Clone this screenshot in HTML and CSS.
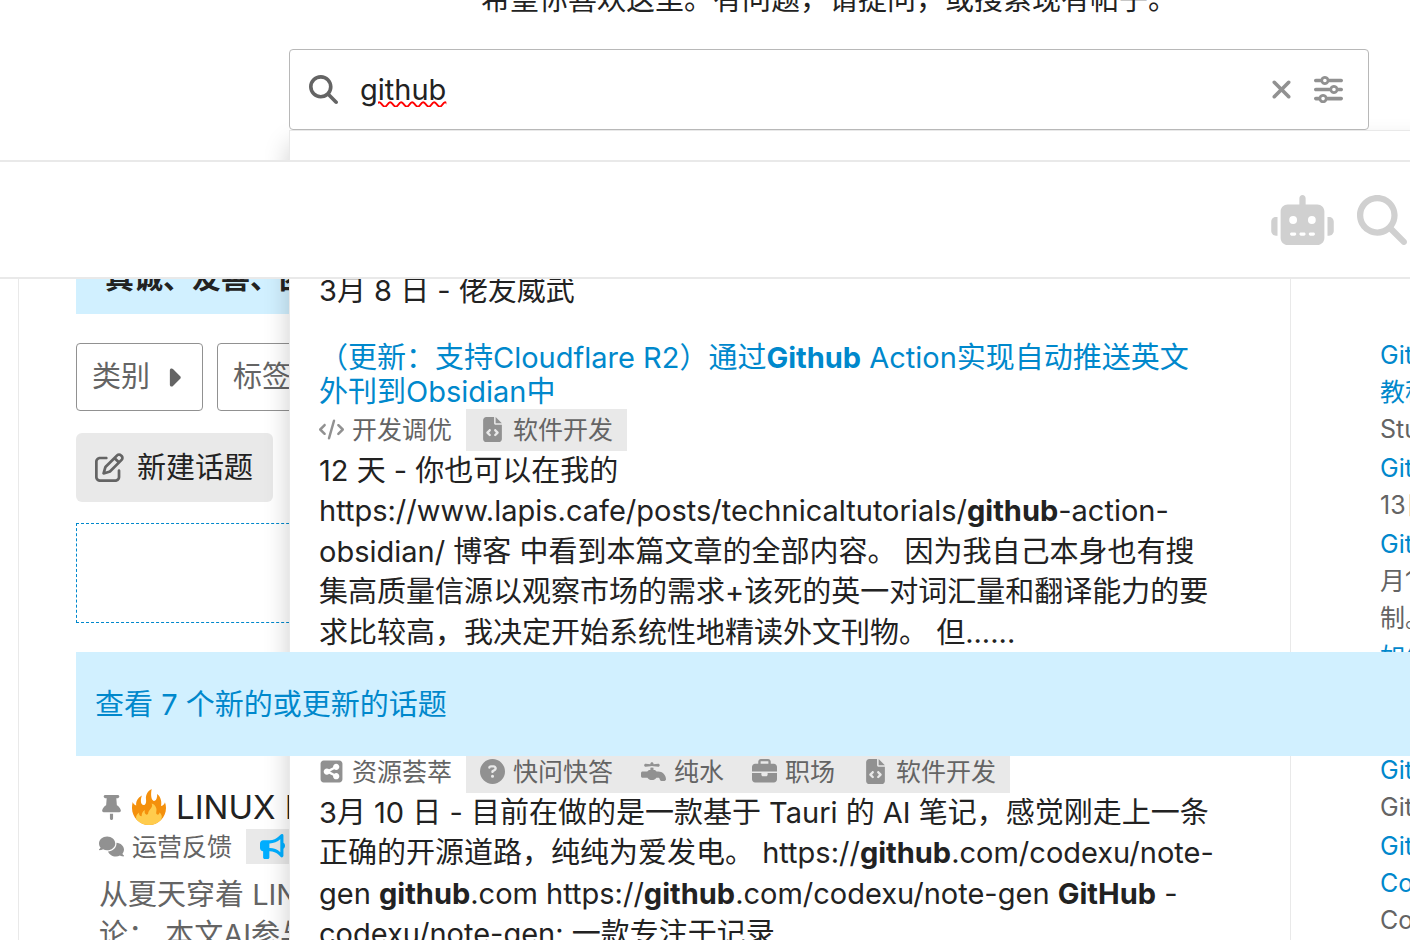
FILE: index.html
```html
<!DOCTYPE html>
<html lang="zh-CN">
  <head>
    <title>LINUX DO</title>
    <meta charset="UTF-8" />
    <meta name="viewport" content="width=device-width, initial-scale=1.0" />
    <link rel="stylesheet" href="styles.css">
  </head>
  <body>
    <!-- icon sprite -->
    <svg class="sprite" aria-hidden="true">
      <symbol id="search" viewBox="0 0 512 512"><path d="M416 208c0 45.900-14.900 88.300-40 122.700L502.600 457.400c12.500 12.500 12.500 32.800 0 45.300s-32.800 12.500-45.300 0L330.700 376c-34.400 25.200-76.800 40-122.700 40C93.100 416 0 322.900 0 208S93.100 0 208 0S416 93.100 416 208zM208 352a144 144 0 1 0 0-288 144 144 0 1 0 0 288z" /></symbol>
      <symbol id="xmark" viewBox="0 0 384 512"><path d="M342.600 150.600c12.500-12.500 12.500-32.800 0-45.300s-32.800-12.500-45.300 0L192 210.700 86.600 105.400c-12.500-12.500-32.800-12.500-45.300 0s-12.500 32.800 0 45.300L146.700 256 41.400 361.400c-12.500 12.500-12.500 32.800 0 45.300s32.800 12.500 45.300 0L192 301.300 297.400 406.600c12.500 12.500 32.800 12.500 45.300 0s12.500-32.800 0-45.300L237.300 256 342.600 150.600z" /></symbol>
      <symbol id="sliders" viewBox="0 0 512 512"><path d="M0 416c0 17.700 14.300 32 32 32l54.700 0c12.300 28.300 40.500 48 73.300 48s61-19.700 73.300-48L480 448c17.700 0 32-14.300 32-32s-14.300-32-32-32l-246.700 0c-12.300-28.300-40.500-48-73.300-48s-61 19.700-73.300 48L32 384c-17.700 0-32 14.300-32 32zm128 0a32 32 0 1 1 64 0 32 32 0 1 1 -64 0zM320 256a32 32 0 1 1 64 0 32 32 0 1 1 -64 0zm32-80c-32.800 0-61 19.700-73.300 48L32 224c-17.700 0-32 14.300-32 32s14.300 32 32 32l246.700 0c12.300 28.300 40.500 48 73.300 48s61-19.700 73.300-48l54.700 0c17.700 0 32-14.300 32-32s-14.300-32-32-32l-54.700 0c-12.300-28.300-40.500-48-73.300-48zM192 128a32 32 0 1 1 0-64 32 32 0 1 1 0 64zm73.300-64C253 35.700 224.800 16 192 16s-61 19.700-73.300 48L32 64C14.300 64 0 78.300 0 96s14.300 32 32 32l86.700 0c12.300 28.300 40.500 48 73.300 48s61-19.700 73.300-48L480 128c17.700 0 32-14.300 32-32s-14.300-32-32-32L265.300 64z" /></symbol>
      <symbol id="robot" viewBox="0 0 640 512"><path d="M320 0c17.700 0 32 14.300 32 32V96H472c39.800 0 72 32.200 72 72V440c0 39.800-32.200 72-72 72H168c-39.800 0-72-32.200-72-72V168c0-39.800 32.200-72 72-72H288V32c0-17.700 14.300-32 32-32zM208 384c-8.800 0-16 7.200-16 16s7.200 16 16 16h32c8.800 0 16-7.200 16-16s-7.200-16-16-16H208zm96 0c-8.800 0-16 7.200-16 16s7.200 16 16 16h32c8.800 0 16-7.200 16-16s-7.200-16-16-16H304zm96 0c-8.800 0-16 7.200-16 16s7.200 16 16 16h32c8.800 0 16-7.200 16-16s-7.200-16-16-16H400zM264 256a40 40 0 1 0 -80 0 40 40 0 1 0 80 0zm152 40a40 40 0 1 0 0-80 40 40 0 1 0 0 80zM48 224H64V416H48c-26.500 0-48-21.500-48-48V272c0-26.500 21.500-48 48-48zm544 0c26.500 0 48 21.500 48 48v96c0 26.500-21.500 48-48 48H576V224h16z" /></symbol>
      <symbol id="caret" viewBox="0 0 256 512"><path d="M246.600 278.600c12.500-12.500 12.500-32.800 0-45.300l-128-128c-9.200-9.200-22.900-11.900-34.900-6.900s-19.800 16.600-19.800 29.600l0 256c0 12.900 7.800 24.600 19.800 29.600s25.700 2.200 34.900-6.900l128-128z" /></symbol>
      <symbol id="edit" viewBox="0 0 512 512"><path d="M441 58.900L453.100 71c9.400 9.400 9.400 24.600 0 33.900L424 134.100 377.900 88 407 58.900c9.400-9.400 24.600-9.400 33.900 0zM209.800 256.200L344 121.900 390.100 168 255.800 302.200c-2.900 2.900-6.500 5-10.400 6.100l-58.500 16.700 16.700-58.500c1.100-3.900 3.200-7.500 6.100-10.400zM373.100 25L175.800 222.200c-8.700 8.700-15 19.400-18.300 31.100l-28.600 100c-2.400 8.400-.1 17.400 6.100 23.600s15.200 8.500 23.600 6.100l100-28.600c11.800-3.400 22.500-9.700 31.100-18.300L487 138.900c28.100-28.100 28.100-73.700 0-101.800L474.900 25C446.800-3.100 401.200-3.100 373.100 25zM88 64C39.400 64 0 103.400 0 152V424c0 48.600 39.400 88 88 88H360c48.600 0 88-39.400 88-88V312c0-13.300-10.700-24-24-24s-24 10.700-24 24V424c0 22.100-17.900 40-40 40H88c-22.100 0-40-17.900-40-40V152c0-22.100 17.900-40 40-40H200c13.300 0 24-10.700 24-24s-10.700-24-24-24H88z" /></symbol>
      <symbol id="pin" viewBox="0 0 384 512"><path d="M32 32C32 14.300 46.300 0 64 0H320c17.700 0 32 14.300 32 32s-14.300 32-32 32H290.500l11.400 148.200c36.700 19.900 65.700 53.200 79.500 94.700l1 3c3.300 9.800 1.600 20.500-4.400 28.800s-15.700 13.300-26 13.300H32c-10.300 0-19.900-4.900-26-13.300s-7.700-19.100-4.400-28.800l1-3c13.800-41.500 42.800-74.800 79.500-94.700L93.500 64H64C46.300 64 32 49.700 32 32zM160 384h64v96c0 17.700-14.300 32-32 32s-32-14.300-32-32V384z" /></symbol>
      <symbol id="comments" viewBox="0 0 640 512"><path d="M208 352c114.900 0 208-78.800 208-176S322.900 0 208 0S0 78.800 0 176c0 38.600 14.700 74.300 39.600 103.400c-3.500 9.400-8.700 17.700-14.200 24.700c-4.800 6.200-9.700 11-13.300 14.300c-1.800 1.600-3.300 2.900-4.300 3.700c-.5 .4-.9 .7-1.100 .8l-.2 .2C1 327.200-1.400 334.400 .8 340.900S9.100 352 16 352c21.800 0 43.800-5.600 62.100-12.500c9.200-3.500 17.800-7.400 25.200-11.400C134.100 343.300 169.800 352 208 352zM448 176c0 112.300-99.100 196.900-216.500 207C255.800 457.400 336.400 512 432 512c38.200 0 73.900-8.700 104.700-23.900c7.500 4 16 7.900 25.200 11.400c18.300 6.900 40.300 12.500 62.100 12.500c6.900 0 13.100-4.500 15.200-11.100c2.100-6.600-.2-13.800-5.800-17.900l-.2-.2c-.2-.2-.6-.4-1.100-.8c-1-.8-2.500-2-4.300-3.700c-3.600-3.300-8.500-8.100-13.300-14.300c-5.500-7-10.700-15.400-14.200-24.700c24.900-29 39.600-64.700 39.600-103.400c0-92.800-84.900-168.900-192.600-175.500c.4 5.100 .6 10.300 .6 15.500z" /></symbol>
      <symbol id="bullhorn" viewBox="0 0 512 512"><path d="M480 32c0-12.900-7.800-24.600-19.800-29.600s-25.700-2.200-34.900 6.900L381.700 53c-48 48-113.100 75-181 75H192 160 64c-35.300 0-64 28.700-64 64v96c0 35.300 28.700 64 64 64l0 128c0 17.700 14.300 32 32 32h64c17.700 0 32-14.300 32-32V352l8.700 0c67.900 0 133 27 181 75l43.600 43.600c9.200 9.200 22.900 11.900 34.900 6.900s19.800-16.600 19.800-29.600V300.400c18.600-8.800 32-32.500 32-60.400s-13.400-51.600-32-60.400V32zm-64 76.700V240 371.300C357.200 317.800 280.500 288 200.700 288H192V192h8.700c79.800 0 156.500-29.800 215.300-83.300z" /></symbol>
      <symbol id="code" viewBox="0 0 640 512"><path d="M392.800 1.200c-17-4.900-34.700 5-39.600 22l-128 448c-4.900 17 5 34.700 22 39.600s34.700-5 39.600-22l128-448c4.900-17-5-34.700-22-39.600zm80.600 120.100c-12.500 12.500-12.500 32.800 0 45.300L562.700 256l-89.400 89.400c-12.500 12.500-12.500 32.800 0 45.300s32.800 12.500 45.300 0l112-112c12.500-12.500 12.500-32.800 0-45.300l-112-112c-12.500-12.500-32.800-12.500-45.300 0zm-306.700 0c-12.500-12.500-32.800-12.500-45.300 0l-112 112c-12.500 12.500-12.500 32.800 0 45.300l112 112c12.500 12.500 32.800 12.500 45.300 0s12.500-32.800 0-45.300L77.300 256l89.400-89.400c12.500-12.500 12.500-32.800 0-45.300z" /></symbol>
      <symbol id="file-code" viewBox="0 0 384 512"><path d="M64 0C28.700 0 0 28.700 0 64V448c0 35.300 28.700 64 64 64H320c35.300 0 64-28.700 64-64V160H256c-17.700 0-32-14.300-32-32V0H64zM256 0V128H384L256 0zM153 289l-31 31 31 31c9.400 9.400 9.400 24.600 0 33.900s-24.600 9.400-33.900 0L71 337c-9.400-9.400-9.400-24.600 0-33.900l48-48c9.400-9.400 24.600-9.400 33.900 0s9.400 24.600 0 33.900zM265 255l48 48c9.400 9.400 9.400 24.600 0 33.900l-48 48c-9.400 9.400-24.600 9.400-33.900 0s-9.400-24.600 0-33.900l31-31-31-31c-9.400-9.400-9.400-24.600 0-33.900s24.600-9.400 33.900 0z" /></symbol>
      <symbol id="share" viewBox="0 0 448 512"><path d="M64 32C28.700 32 0 60.700 0 96V416c0 35.300 28.700 64 64 64H384c35.300 0 64-28.700 64-64V96c0-35.300-28.700-64-64-64H64zM384 160c0 35.300-28.700 64-64 64c-15.400 0-29.500-5.400-40.600-14.500L194.100 256l85.300 46.500c11-9.100 25.200-14.500 40.600-14.500c35.300 0 64 28.700 64 64s-28.700 64-64 64s-64-28.700-64-64c0-2.500 .1-4.900 .4-7.300L174.500 300c-11.700 12.300-28.200 20-46.500 20c-35.300 0-64-28.700-64-64s28.700-64 64-64c18.300 0 34.800 7.700 46.500 20l81.900-44.700c-.3-2.400-.4-4.900-.4-7.300c0-35.300 28.700-64 64-64s64 28.700 64 64z" /></symbol>
      <symbol id="question" viewBox="0 0 512 512"><path d="M256 512A256 256 0 1 0 256 0a256 256 0 1 0 0 512zM169.800 165.300c7.900-22.300 29.100-37.300 52.800-37.300h58.300c34.900 0 63.100 28.300 63.100 63.100c0 22.600-12.100 43.500-31.700 54.800L280 264.400c-.2 13-10.900 23.600-24 23.600c-13.300 0-24-10.700-24-24V250.500c0-8.600 4.600-16.500 12.100-20.800l44.300-25.400c4.700-2.700 7.600-7.700 7.600-13.100c0-8.400-6.800-15.100-15.100-15.100H222.600c-3.400 0-6.400 2.100-7.500 5.300l-.4 1.200c-4.400 12.500-18.200 19-30.600 14.600s-19-18.200-14.600-30.600l.4-1.200zM224 352a32 32 0 1 1 64 0 32 32 0 1 1 -64 0z" /></symbol>
      <symbol id="faucet" viewBox="0 0 512 512"><path d="M192 96v12L96 96c-17.700 0-32 14.300-32 32s14.300 32 32 32l96-12 31-3.900 1-.1 1 .1 31 3.900 96 12c17.700 0 32-14.300 32-32s-14.300-32-32-32l-96 12V96c0-17.700-14.300-32-32-32s-32 14.300-32 32zM32 256c-17.700 0-32 14.300-32 32v64c0 17.700 14.300 32 32 32H132.100c20.200 29 53.900 48 91.900 48s71.700-19 91.900-48H352c17.700 0 32 14.300 32 32s14.300 32 32 32h64c17.700 0 32-14.300 32-32c0-88.400-71.600-160-160-160H320l-22.600-22.600c-6-6-14.100-9.400-22.600-9.400H256V180.200l-32-4-32 4V224H173.300c-8.500 0-16.600 3.400-22.600 9.400L128 256H32z" /></symbol>
      <symbol id="briefcase" viewBox="0 0 512 512"><path d="M184 48H328c4.400 0 8 3.600 8 8V96H176V56c0-4.400 3.600-8 8-8zm-56 8V96H64C28.700 96 0 124.700 0 160v96H192 320 512V160c0-35.300-28.700-64-64-64H384V56c0-30.900-25.100-56-56-56H184c-30.900 0-56 25.100-56 56zM512 288H320v32c0 17.700-14.300 32-32 32H224c-17.700 0-32-14.300-32-32V288H0V416c0 35.300 28.700 64 64 64H448c35.300 0 64-28.700 64-64V288z" /></symbol>
      <symbol id="fire" viewBox="0 0 36 36">
        <path fill="#f4900c" d="M35 19c0-2.060-.37-4.040-1.030-5.870-.46 1.480-1.510 3.250-3.920 3.810.64-2.500.47-8.960-3.930-11.940.3 3.200-.6 6.200-2.400 6.800-2.500.8-4.600-3.500-3.100-11.800-3 1.500-6.300 5.200-5.600 10.500.4 2.800-.4 5.700-2.500 5.500-2.800-.2-3.400-4.500-1.600-9.400C6.500 9 4.700 12.800 5.200 16.500 3.600 16 2.300 14.600 1.700 13 1.200 14.900 1 17 1 19c0 9.390 7.610 17 17 17s17-7.610 17-17z" />
        <path fill="#ffcc4d" d="M28.400 23.500c.1 1.700-1.300 2.700-2.500 1.800-1.500-1.200.2-3.600-.7-6.400-.8-2.600-2.900-4.200-4.600-4.400 1.200 2.700 0 4.100-1.400 5.800-1 1.200-1.900 2.500-2 3.900-.2 1.500-1.700 1.900-2.700.9-1-1-1-2.600-.5-4.100-2.900 1.500-3.500 4.300-3.300 6.200-1.900 0-2.900-1.700-2.600-3.800C5 25.600 4.500 28.200 5.600 30.700 8.700 34 13.100 36 18 36c4.700 0 9-1.900 12-5 1.700-3.100.5-6.100-1.600-7.500z" />
      </symbol>
    </svg>

    <div class="page">
      <header class="d-header">
        <a href="#" title="AI"><svg class="robot"><use href="#robot" /></svg></a>
        <a href="#" title="搜索"><svg><use href="#search" /></svg></a>
      </header>

      <section class="banner-search">
        <p class="welcome">希望你喜欢这里。有问题，请提问，或搜索现有帖子。</p>
        <div class="search-menu">
          <form class="search-box">
            <svg class="icon search-icon"><use href="#search" /></svg>
            <input type="text" aria-label="搜索" value="github" spellcheck="false" />
            <button type="button" title="清除搜索"><svg class="icon"><use href="#xmark" /></svg></button>
            <button type="button" title="高级搜索"><svg class="icon"><use href="#sliders" /></svg></button>
          </form>

          <div class="results-panel">
            <div class="results">
              <article class="result">
                <p class="blurb">3月 8 日 - 佬友威武</p>
              </article>

              <article class="result">
                <a class="result-title" href="#">（更新：支持Cloudflare R2）通过<b>Github</b> Action实现自动推送英文外刊到Obsidian中</a>
                <div class="meta">
                  <span class="category"><svg><use href="#code" /></svg>开发调优</span>
                  <span class="tags">
                    <span class="tag"><svg><use href="#file-code" /></svg>软件开发</span>
                  </span>
                </div>
                <p class="blurb">12 天 - 你也可以在我的 https://www.lapis.cafe/posts/technicaltutorials/<b>github</b>-action-obsidian/ 博客 中看到本篇文章的全部内容。 因为我自己本身也有搜集高质量信源以观察市场的需求+该死的英一对词汇量和翻译能力的要求比较高，我决定开始系统性地精读外文刊物。 但......</p>
              </article>

              <article class="result">
                <a class="result-title covered" href="#"></a>
                <div class="meta">
                  <span class="category"><svg><use href="#share" /></svg>资源荟萃</span>
                  <span class="tags">
                    <span class="tag"><svg><use href="#question" /></svg>快问快答</span>
                    <span class="tag"><svg><use href="#faucet" /></svg>纯水</span>
                    <span class="tag"><svg><use href="#briefcase" /></svg>职场</span>
                    <span class="tag"><svg><use href="#file-code" /></svg>软件开发</span>
                  </span>
                </div>
                <p class="blurb">3月 10 日 - 目前在做的是一款基于 Tauri 的 AI 笔记，感觉刚走上一条正确的开源道路，纯纯为爱发电。 https://<b>github</b>.com/codexu/note-gen <b>github</b>.com https://<b>github</b>.com/codexu/note-gen <b>GitHub</b> - codexu/note-gen: 一款专注于记录</p>
              </article>
            </div>

            <ul class="related">
              <li><a href="#">GitHub<br />教程</a><span>Student</span></li>
              <li><a href="#">GitHub</a><span>13日</span></li>
              <li><a href="#">GitHub</a><span>月1日<br />制。</span></li>
              <li class="tall"><a href="#">如何</a></li>
              <li><a href="#">GitHub</a><span>GitHub</span></li>
              <li><a href="#">GitHub<br />Copilot</a><span>Copilot</span></li>
            </ul>
          </div>
        </div>
      </section>

      <main class="main-outlet">
        <div class="announcement">真诚、友善、团结</div>
        <nav class="filters">
          <button type="button">类别<svg><use href="#caret" /></svg></button>
          <button type="button">标签<svg><use href="#caret" /></svg></button>
        </nav>
        <button type="button" class="new-topic"><svg><use href="#edit" /></svg>新建话题</button>
        <div class="notice"></div>
        <a class="show-more" href="#">查看 7 个新的或更新的话题</a>
        <article class="topic">
          <h2>
            <svg class="pin"><use href="#pin" /></svg>
            <svg class="emoji"><use href="#fire" /></svg>
            <a href="#">LINUX DO</a>
          </h2>
          <div class="meta">
            <span class="category"><svg><use href="#comments" /></svg>运营反馈</span>
            <span class="tags"><span class="tag announce"><svg><use href="#bullhorn" /></svg></span></span>
          </div>
          <p>从夏天穿着 LINUX<br />论： 本文AI参与</p>
        </article>
      </main>
    </div>
  </body>
</html>
```

FILE: styles.css
```css
* {
  box-sizing: border-box;
}

body {
  margin: 0;
  background: #fff;
  color: #222;
  font-family: Inter, "Noto Sans CJK SC", sans-serif;
  font-size: 29px;
  line-height: 40px;
}

a {
  color: #08c;
  text-decoration: none;
}

p,
h2,
ul {
  margin: 0;
  padding: 0;
}

button,
input {
  font: inherit;
  color: inherit;
  border: 0;
  background: none;
  padding: 0;
}

svg {
  fill: currentColor;
  flex: none;
}

.sprite {
  display: none;
}

.page {
  position: relative;
  height: 100vh;
  overflow: hidden;
}

/* header */
.d-header {
  position: absolute;
  top: 160px;
  left: 0;
  right: 0;
  z-index: 10;
  height: 119px;
  padding-right: 3px;
  display: flex;
  align-items: center;
  justify-content: flex-end;
  gap: 23px;
  background: #fff;
  border-top: 2px solid #e9e9e9;
  border-bottom: 2px solid #e9e9e9;
}

.d-header a {
  display: flex;
  color: #d0d0d0;
}

.d-header svg {
  width: 50px;
  height: 50px;
}

.d-header .robot {
  width: 63px;
}

/* search */
.welcome {
  margin: -20px 0 29px;
  text-align: center;
}

.banner-search {
  padding: 0 41px 0 289px;
}

.search-menu {
  position: relative;
  z-index: 1;
}

.search-box {
  position: relative;
  z-index: 2;
  display: flex;
  align-items: center;
  height: 81px;
  padding: 0 25px 0 19px;
  background: #fff;
  border: 1px solid #b8b8b8;
  border-radius: 4px;
}

.search-box input {
  flex: 1;
  min-width: 0;
  height: 60px;
  padding-left: 22px;
  outline: none;
  text-decoration: underline wavy #f00 2px;
}

.search-box button {
  display: flex;
  margin-left: 18px;
  color: #919191;
}

.search-box .icon {
  width: 29px;
  height: 29px;
}

.search-icon {
  color: #646464;
}

.results-panel {
  position: absolute;
  top: 81px;
  left: 0;
  right: -272px;
  display: flex;
  padding-top: 140px;
  background: #fff;
  border: 1px solid #e9e9e9;
  box-shadow: 0 14px 24px rgba(0, 0, 0, 0.2);
}

.results {
  flex: 1;
  padding: 0 75px 0 29px;
  border-right: 1px solid #e9e9e9;
}

.result {
  margin-bottom: 29px;
}

.result-title {
  display: block;
  line-height: 34px;
}

.result-title.covered {
  height: 68px;
}

.blurb {
  line-height: 1.4;
}

.meta {
  display: flex;
  gap: 14px;
  height: 42px;
  color: #646464;
  font-size: 25px;
}

.category,
.tag {
  display: flex;
  align-items: center;
  gap: 8px;
}

.tags {
  display: flex;
  gap: 28px;
  padding: 0 14px;
  background: #e9e9e9;
}

.meta svg {
  width: 25px;
  height: 25px;
  color: #919191;
}

.related {
  width: 349px;
  padding: 66px 0 0 89px;
  list-style: none;
  color: #646464;
  font-size: 25px;
  line-height: 37px;
}

.related li {
  margin-bottom: 2px;
}

.related .tall {
  height: 111px;
}

.related a,
.related span {
  display: block;
}

/* topic list */
.main-outlet {
  margin: 60px 0 0 18px;
  padding: 40px 0 0 57px;
  border-left: 1px solid #e9e9e9;
}

.announcement {
  padding: 29px 29px 15px;
  background: #d1f0ff;
  font-weight: bold;
}

.filters {
  display: flex;
  gap: 14px;
  margin-top: 29px;
}

.filters button {
  display: flex;
  align-items: center;
  gap: 16px;
  height: 68px;
  padding: 0 21px 0 15px;
  border: 1px solid #919191;
  border-radius: 4px;
  color: #646464;
}

.filters svg {
  width: 15px;
  height: 29px;
}

.new-topic {
  display: flex;
  align-items: center;
  gap: 13px;
  height: 69px;
  margin-top: 22px;
  padding: 0 20px 0 19px;
  background: #e9e9e9;
  border-radius: 6px;
}

.new-topic svg {
  width: 29px;
  height: 29px;
  color: #646464;
}

.notice {
  height: 100px;
  margin-top: 21px;
  border: 1px dashed #08c;
}

.show-more {
  position: relative;
  z-index: 2;
  display: block;
  margin-top: 29px;
  padding: 33px 19px 31px;
  background: #d1f0ff;
}

.topic {
  padding: 29px 23px;
  color: #646464;
}

.topic h2 {
  display: flex;
  align-items: center;
  height: 44px;
  font-size: 33px;
  font-weight: normal;
}

.topic h2 a {
  margin-left: 9px;
  color: #222;
  white-space: nowrap;
}

.pin {
  width: 25px;
  height: 25px;
  color: #919191;
}

.emoji {
  width: 36px;
  height: 36px;
  margin-left: 7px;
}

.topic .meta {
  height: 35px;
  margin-bottom: 11px;
}

.topic .announce svg {
  color: #00aeff;
}
```
